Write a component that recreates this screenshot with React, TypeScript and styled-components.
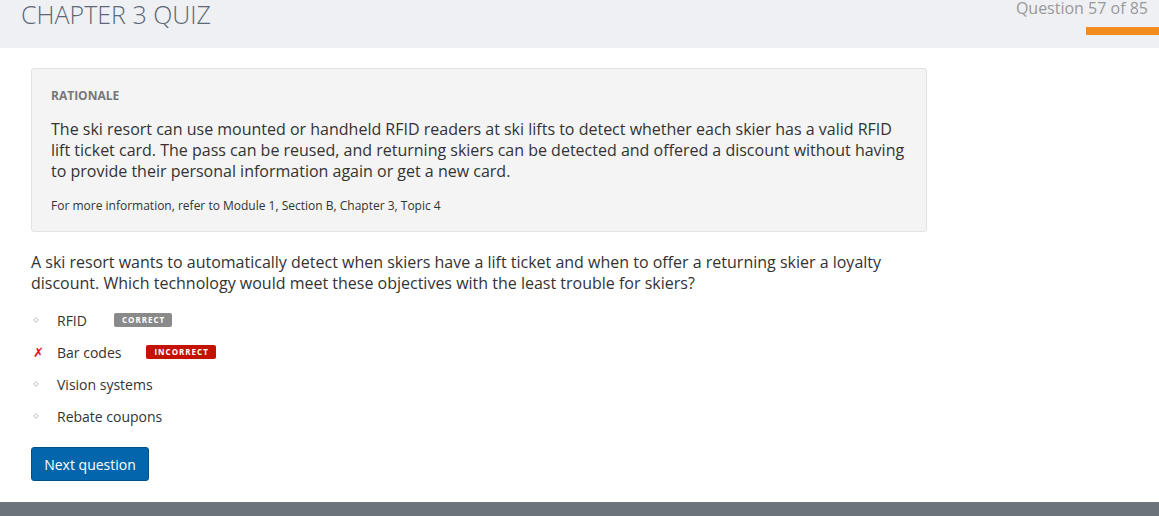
import React from "react";
import styled, { createGlobalStyle } from "styled-components";

const Global = createGlobalStyle`
  html, body { margin: 0; padding: 0; background: #fff; }
  body { font-family: "Open Sans", "Liberation Sans", sans-serif; color: #333; }
  * { box-sizing: border-box; }
`;

const Page = styled.div`
  width: 1159px;
  height: 516px;
  display: flex;
  flex-direction: column;
  overflow: hidden;
`;

const Header = styled.header`
  height: 48px;
  background: #eff0f4;
  display: flex;
  justify-content: space-between;
  align-items: flex-start;
  flex-shrink: 0;
`;

const Title = styled.h1`
  margin: 0;
  padding-left: 21px;
  font-size: 25px;
  font-weight: 300;
  line-height: 28px;
  color: #5f6875;
`;

const Progress = styled.div`
  display: flex;
  flex-direction: column;
  align-items: flex-end;
`;

const Counter = styled.div`
  font-size: 16px;
  line-height: 17px;
  color: #999;
  padding-right: 11px;
`;

const Bar = styled.div`
  margin-top: 10px;
  width: 73px;
  height: 8px;
  background: #f28c1e;
`;

const Main = styled.main`
  flex: 1;
  padding: 20px 0 0 31px;
`;

const Rationale = styled.section`
  width: 896px;
  background: #f4f4f4;
  border: 1px solid #e2e2e2;
  border-radius: 3px;
  padding: 18px 19px 16px;
`;

const Label = styled.div`
  font-size: 12px;
  font-weight: 700;
  color: #777;
  line-height: 18px;
`;

const Para = styled.p`
  margin: 14px 0 0;
  font-size: 16px;
  line-height: 21px;
  color: #333;
`;

const Note = styled.p`
  margin: 15px 0 0;
  font-size: 12px;
  line-height: 18px;
  color: #333;
`;

const Question = styled.p`
  margin: 20px 0 0;
  width: 880px;
  font-size: 16px;
  line-height: 21px;
  color: #333;
`;

const Options = styled.ul`
  list-style: none;
  margin: 10px 0 0;
  padding: 0;
`;

const Option = styled.li`
  display: flex;
  align-items: center;
  height: 32px;
  font-size: 14px;
  color: #333;
`;

const Marker = styled.span`
  width: 26px;
  display: flex;
  align-items: center;
  padding-left: 2px;
`;

const Cross = styled.span`
  color: #e8101a;
  font-size: 13px;
  font-weight: 700;
  font-style: italic;
  font-family: "DejaVu Sans", sans-serif;
`;

const Badge = styled.span<{ $tone: "correct" | "incorrect" }>`
  margin-left: ${(p) => (p.$tone === "correct" ? "27px" : "25px")};
  background: ${(p) => (p.$tone === "correct" ? "#8a8a8a" : "#c41200")};
  color: #fff;
  font-size: 8px;
  font-weight: 700;
  letter-spacing: 1px;
  line-height: 14px;
  height: 14px;
  padding: 0 7px 0 8px;
  border-radius: 2px;
`;

const Button = styled.button`
  margin-top: 15px;
  width: 118px;
  height: 34px;
  background: #0366ac;
  border: 1px solid #02528a;
  border-radius: 3px;
  color: #fff;
  font-family: inherit;
  font-size: 14px;
  font-weight: 400;
  padding: 0;
`;

const Footer = styled.footer`
  height: 14px;
  background: #6b737b;
  flex-shrink: 0;
`;

const Diamond = () => (
  <svg width="6" height="6" viewBox="0 0 6 6">
    <path d="M3 0.7 L5.3 3 L3 5.3 L0.7 3 Z" fill="none" stroke="#bdbdbd" strokeWidth="1" />
  </svg>
);

const options = [
  { text: "RFID", badge: "correct" as const, wrong: false },
  { text: "Bar codes", badge: "incorrect" as const, wrong: true },
  { text: "Vision systems" },
  { text: "Rebate coupons" },
];

export default function App() {
  return (
    <Page>
      <Global />
      <Header>
        <Title>CHAPTER 3 QUIZ</Title>
        <Progress>
          <Counter>Question 57 of 85</Counter>
          <Bar />
        </Progress>
      </Header>
      <Main>
        <Rationale>
          <Label>RATIONALE</Label>
          <Para>
            The ski resort can use mounted or handheld RFID readers at ski lifts to detect whether each skier has a valid RFID
            lift ticket card. The pass can be reused, and returning skiers can be detected and offered a discount without having
            to provide their personal information again or get a new card.
          </Para>
          <Note>For more information, refer to Module 1, Section B, Chapter 3, Topic 4</Note>
        </Rationale>
        <Question>
          A ski resort wants to automatically detect when skiers have a lift ticket and when to offer a returning skier a loyalty
          discount. Which technology would meet these objectives with the least trouble for skiers?
        </Question>
        <Options>
          {options.map((o) => (
            <Option key={o.text}>
              <Marker>{o.wrong ? <Cross>✗</Cross> : <Diamond />}</Marker>
              {o.text}
              {o.badge && (
                <Badge $tone={o.badge}>{o.badge === "correct" ? "CORRECT" : "INCORRECT"}</Badge>
              )}
            </Option>
          ))}
        </Options>
        <Button>Next question</Button>
      </Main>
      <Footer />
    </Page>
  );
}
